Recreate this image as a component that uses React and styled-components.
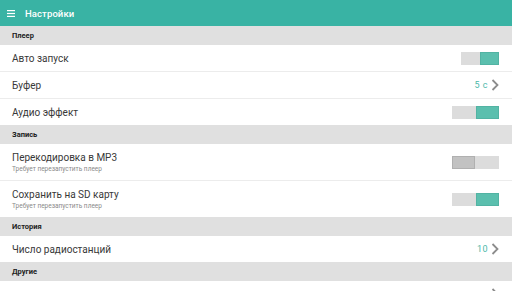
import React, {useState} from 'react';
import styled, {createGlobalStyle} from "styled-components";

const GlobalStyle = createGlobalStyle`
  html, body {
    margin: 0;
    padding: 0;
    background: #fff;
    overflow: hidden;
  }
  body {
    font-family: Roboto, "Liberation Sans", sans-serif;
  }
`

const Page = styled.div`
  width: 512px;
  height: 291px;
  overflow: hidden;
  background: #fff;
`

const Toolbar = styled.div`
  height: 26px;
  background: #39b3a4;
  display: flex;
  align-items: center;
  padding-left: 7px;
  gap: 10px;
  color: #fff;
`

const Title = styled.div`
  font-size: 9.5px;
  font-weight: 500;
  letter-spacing: 0.1px;
`

const SectionHeader = styled.div`
  height: 19px;
  background: #e0e0e0;
  display: flex;
  align-items: center;
  padding-left: 12px;
  font-size: 7.5px;
  font-weight: 700;
  color: #222;
`

const Row = styled.div`
  display: flex;
  align-items: center;
  justify-content: space-between;
  padding: 0 13px 0 12px;
  box-sizing: border-box;
  border-bottom: ${p => p.last ? "none" : "1px solid #ececec"};
  height: ${p => p.tall ? (p.last ? "36px" : "37px") : (p.last ? "26px" : "27px")};
`

const TextBlock = styled.div`
  display: flex;
  flex-direction: column;
`

const RowTitle = styled.div`
  font-size: 10px;
  color: #383838;
`

const RowSub = styled.div`
  font-size: 6.5px;
  color: #8a8a8a;
  margin-top: 2px;
`

const Value = styled.div`
  display: flex;
  align-items: center;
  gap: 3px;
  font-size: 9px;
  letter-spacing: 0.5px;
  color: #4cb8a9;
`

const Switch = styled.div`
  display: flex;
  width: ${p => p.small ? "38px" : "47px"};
  height: 13px;
  background: #dcdcdc;
`

const Knob = styled.div`
  width: ${p => p.small ? "19px" : "23px"};
  height: 100%;
  box-sizing: border-box;
  margin-left: ${p => p.on ? "auto" : "0"};
  background: ${p => p.on ? "#5bbfae" : "#c2c2c2"};
  border: 1px solid ${p => p.on ? "#52b3a3" : "#b0b0b0"};
`

const Chevron = () => (
    <svg width="8" height="12" viewBox="0 0 8 12">
        <path d="M1.5 1 L6.5 6 L1.5 11" fill="none" stroke="#8c8c8c" strokeWidth="1.8"/>
    </svg>
)

const Burger = () => (
    <svg width="8" height="7" viewBox="0 0 8 7">
        <rect x="0" y="0" width="8" height="1.2" fill="#fff"/>
        <rect x="0" y="2.9" width="8" height="1.2" fill="#fff"/>
        <rect x="0" y="5.8" width="8" height="1.2" fill="#fff"/>
    </svg>
)

function App() {
    const [toggles, setToggles] = useState({autostart: true, effect: true, mp3: false, sd: true});
    const flip = key => setToggles({...toggles, [key]: !toggles[key]});

    return (
        <Page>
            <GlobalStyle/>
            <Toolbar>
                <Burger/>
                <Title>Настройки</Title>
            </Toolbar>

            <SectionHeader>Плеер</SectionHeader>
            <Row>
                <RowTitle>Авто запуск</RowTitle>
                <Switch small onClick={() => flip("autostart")}>
                    <Knob small on={toggles.autostart}/>
                </Switch>
            </Row>
            <Row>
                <RowTitle>Буфер</RowTitle>
                <Value>5 с <Chevron/></Value>
            </Row>
            <Row last>
                <RowTitle>Аудио эффект</RowTitle>
                <Switch onClick={() => flip("effect")}>
                    <Knob on={toggles.effect}/>
                </Switch>
            </Row>

            <SectionHeader>Запись</SectionHeader>
            <Row tall>
                <TextBlock>
                    <RowTitle>Перекодировка в MP3</RowTitle>
                    <RowSub>Требует перезапустить плеер</RowSub>
                </TextBlock>
                <Switch onClick={() => flip("mp3")}>
                    <Knob on={toggles.mp3}/>
                </Switch>
            </Row>
            <Row tall last>
                <TextBlock>
                    <RowTitle>Сохранить на SD карту</RowTitle>
                    <RowSub>Требует перезапустить плеер</RowSub>
                </TextBlock>
                <Switch onClick={() => flip("sd")}>
                    <Knob on={toggles.sd}/>
                </Switch>
            </Row>

            <SectionHeader>История</SectionHeader>
            <Row last>
                <RowTitle>Число радиостанций</RowTitle>
                <Value>10 <Chevron/></Value>
            </Row>

            <SectionHeader>Другие</SectionHeader>
            <Row last>
                <RowTitle/>
                <Value><Chevron/></Value>
            </Row>
        </Page>
    );
}

export default App;
